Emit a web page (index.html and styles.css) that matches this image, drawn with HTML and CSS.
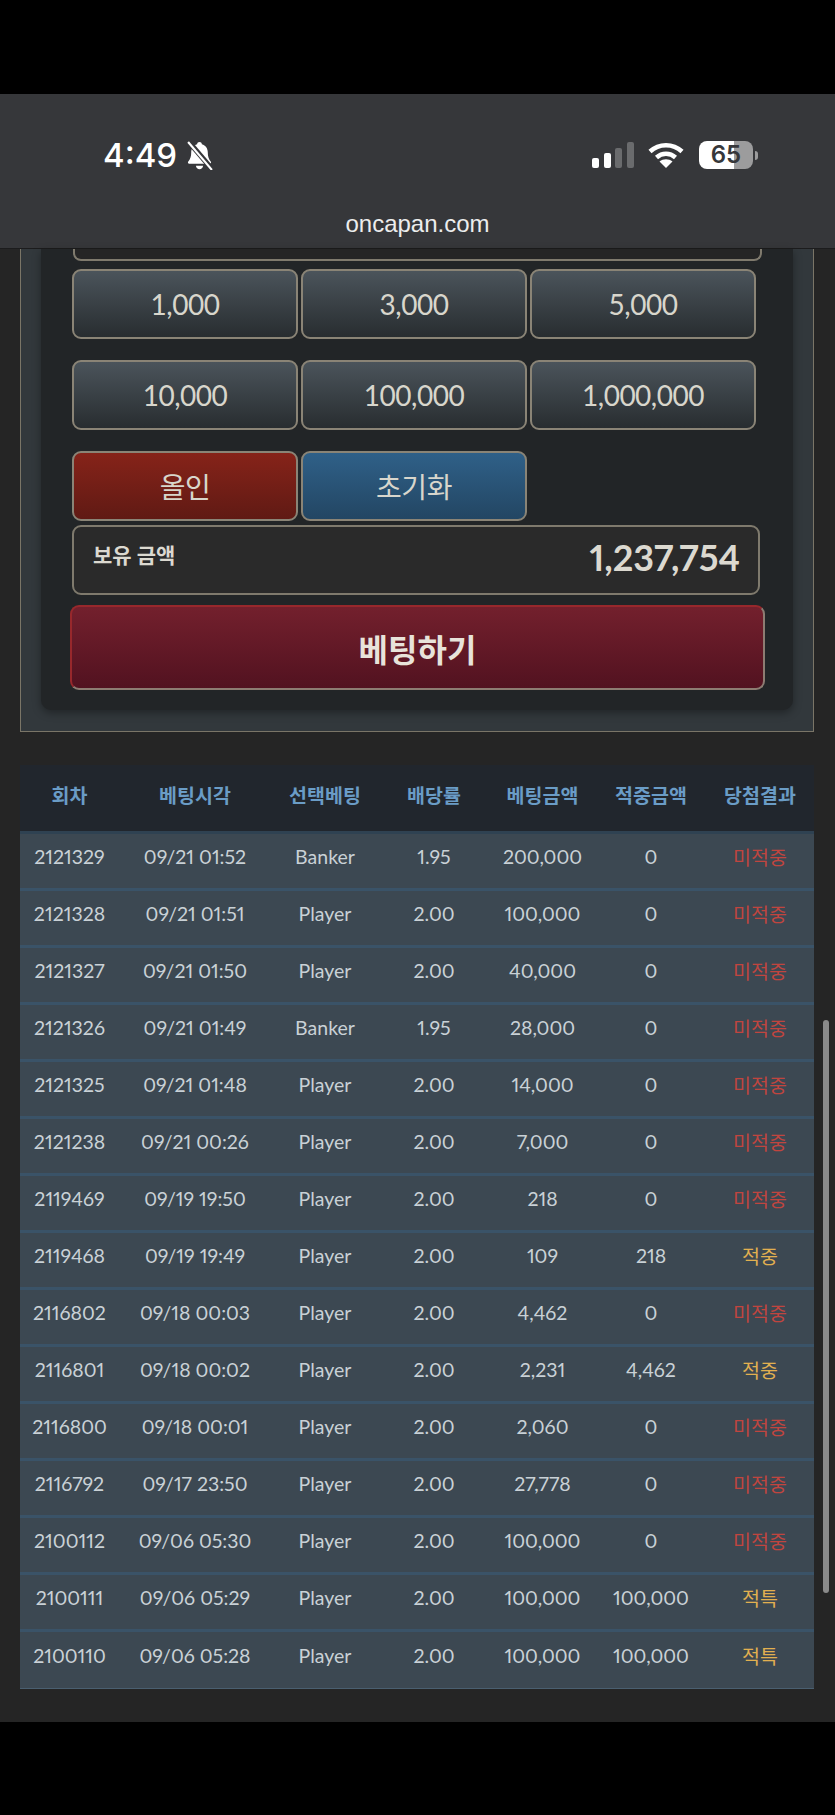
FILE: index.html
```html
<!DOCTYPE html>
<html lang="ko">

<head>
    <meta charset="UTF-8">
    <meta name="viewport" content="width=device-width, initial-scale=1.0">
    <title>oncapan.com</title>
    <link rel="stylesheet" href="styles.css">
</head>

<body>
<div class="black-bar top"></div>

<header class="status">
    <div class="status-row">
        <div class="clock">
            <span>4:49</span>
            <svg class="bell" viewBox="0 0 26 28" width="27" height="29">
                <path fill="#fff" d="M13 1c1.300 0 2.200.9 2.300 2.100 3.700 1 5.700 4 5.700 8 0 4 .8 6 3 9 .5.8 0 1.900-1 1.900H3c-1 0-1.500-1.100-1-1.900 2.200-3 3-5 3-9 0-4 2-7 5.700-8C10.800 1.900 11.700 1 13 1z"/>
                <path fill="#fff" d="M9.500 24h7c-.3 2-1.700 3.300-3.500 3.300S9.800 26 9.500 24z"/>
                <path stroke="#36373a" stroke-width="5" d="M2 0l23 27"/>
                <path stroke="#fff" stroke-width="2" d="M2 1l23 27"/>
            </svg>
        </div>
        <div class="indicators">
            <svg viewBox="0 0 42 26" width="42" height="26">
                <rect x="0" y="16" width="7" height="10" rx="2" fill="#fff"/>
                <rect x="12" y="11" width="7" height="15" rx="2" fill="#fff"/>
                <rect x="23" y="6" width="7" height="20" rx="2" fill="#6a6b6d"/>
                <rect x="35" y="0" width="7" height="26" rx="2" fill="#6a6b6d"/>
            </svg>
            <svg class="wifi" viewBox="0 0 36 26" width="36" height="26">
                <path fill="none" stroke="#fff" stroke-width="4.500" d="M2 9.500C11 1 25 1 34 9.500"/>
                <path fill="none" stroke="#fff" stroke-width="4.500" d="M8.500 15.500c5.500-5 13.500-5 19 0"/>
                <path fill="#fff" d="M18 26l-6.500-6.500c3.800-3 9.200-3 13 0z"/>
            </svg>
            <div class="battery"><span>65</span></div>
            <div class="battery-nub"></div>
        </div>
    </div>
    <div class="url">oncapan.com</div>
</header>

<main class="page">
    <section class="panel">
        <div class="card">
            <div class="amount-input"></div>

            <div class="chip-row">
                <button class="chip">1,000</button>
                <button class="chip">3,000</button>
                <button class="chip">5,000</button>
            </div>
            <div class="chip-row">
                <button class="chip">10,000</button>
                <button class="chip">100,000</button>
                <button class="chip">1,000,000</button>
            </div>
            <div class="chip-row">
                <button class="chip red">올인</button>
                <button class="chip blue">초기화</button>
            </div>

            <div class="balance">
                <span class="balance-label">보유 금액</span>
                <span class="balance-value">1,237,754</span>
            </div>
            <button class="bet-btn">베팅하기</button>
        </div>
    </section>

    <table class="history">
        <thead>
        <tr>
            <th class="c1">회차</th>
            <th class="c2">베팅시각</th>
            <th class="c3">선택베팅</th>
            <th class="c4">배당률</th>
            <th class="c5">베팅금액</th>
            <th class="c6">적중금액</th>
            <th class="c7">당첨결과</th>
        </tr>
        </thead>
        <tbody>
        <tr><td>2121329</td><td>09/21 01:52</td><td>Banker</td><td>1.95</td><td>200,000</td><td>0</td><td class="lose">미적중</td></tr>
        <tr><td>2121328</td><td>09/21 01:51</td><td>Player</td><td>2.00</td><td>100,000</td><td>0</td><td class="lose">미적중</td></tr>
        <tr><td>2121327</td><td>09/21 01:50</td><td>Player</td><td>2.00</td><td>40,000</td><td>0</td><td class="lose">미적중</td></tr>
        <tr><td>2121326</td><td>09/21 01:49</td><td>Banker</td><td>1.95</td><td>28,000</td><td>0</td><td class="lose">미적중</td></tr>
        <tr><td>2121325</td><td>09/21 01:48</td><td>Player</td><td>2.00</td><td>14,000</td><td>0</td><td class="lose">미적중</td></tr>
        <tr><td>2121238</td><td>09/21 00:26</td><td>Player</td><td>2.00</td><td>7,000</td><td>0</td><td class="lose">미적중</td></tr>
        <tr><td>2119469</td><td>09/19 19:50</td><td>Player</td><td>2.00</td><td>218</td><td>0</td><td class="lose">미적중</td></tr>
        <tr><td>2119468</td><td>09/19 19:49</td><td>Player</td><td>2.00</td><td>109</td><td>218</td><td class="win">적중</td></tr>
        <tr><td>2116802</td><td>09/18 00:03</td><td>Player</td><td>2.00</td><td>4,462</td><td>0</td><td class="lose">미적중</td></tr>
        <tr><td>2116801</td><td>09/18 00:02</td><td>Player</td><td>2.00</td><td>2,231</td><td>4,462</td><td class="win">적중</td></tr>
        <tr><td>2116800</td><td>09/18 00:01</td><td>Player</td><td>2.00</td><td>2,060</td><td>0</td><td class="lose">미적중</td></tr>
        <tr><td>2116792</td><td>09/17 23:50</td><td>Player</td><td>2.00</td><td>27,778</td><td>0</td><td class="lose">미적중</td></tr>
        <tr><td>2100112</td><td>09/06 05:30</td><td>Player</td><td>2.00</td><td>100,000</td><td>0</td><td class="lose">미적중</td></tr>
        <tr><td>2100111</td><td>09/06 05:29</td><td>Player</td><td>2.00</td><td>100,000</td><td>100,000</td><td class="win">적특</td></tr>
        <tr><td>2100110</td><td>09/06 05:28</td><td>Player</td><td>2.00</td><td>100,000</td><td>100,000</td><td class="win">적특</td></tr>
        </tbody>
    </table>

    <div class="scrollbar"></div>
</main>

<div class="black-bar bottom"></div>
</body>

</html>
```

FILE: styles.css
```css
* {
    padding: 0;
    margin: 0;
    box-sizing: border-box;
}

body {
    background: #000;
    font-family: "Lato", "Noto Sans CJK KR", sans-serif;
    font-variant-numeric: proportional-nums;
    overflow: hidden;
}

.black-bar.top {
    height: 94px;
}

.black-bar.bottom {
    height: 93px;
}

/* phone status bar */

.status {
    height: 155px;
    background: #36373a;
    border-bottom: 1px solid #1c1c1d;
    color: #fff;
}

.status-row {
    display: flex;
    justify-content: space-between;
    align-items: center;
    padding: 46px 77px 0 103px;
}

.clock {
    display: flex;
    align-items: center;
    gap: 9px;
    font-family: "Inter", sans-serif;
    font-size: 33px;
    font-weight: 500;
    line-height: 30px;
}

.indicators {
    display: flex;
    align-items: center;
}

.wifi {
    margin-left: 14px;
}

.battery {
    width: 54px;
    height: 28px;
    margin-left: 15px;
    border-radius: 8px;
    background: linear-gradient(90deg, #fff 0, #fff 65%, #9c9c9d 65%);
    color: #36373a;
    font-family: "Inter", sans-serif;
    font-size: 24px;
    font-weight: 600;
    line-height: 28px;
    text-align: center;
}

.battery-nub {
    width: 3px;
    height: 9px;
    margin-left: 2px;
    border-radius: 0 3px 3px 0;
    background: #9c9c9d;
}

.url {
    margin-top: 40px;
    text-align: center;
    font-family: "Liberation Sans", sans-serif;
    font-size: 24px;
    color: #eceded;
}

/* betting panel */

.page {
    position: relative;
    height: 1473px;
    background: #252525;
    padding: 0 21px 0 20px;
}

.panel {
    height: 483px;
    padding: 0 20px 21px;
    background: #32383c;
    border: 1px solid #7a7567;
    border-top: none;
}

.card {
    height: 100%;
    padding: 0 30px 0 31px;
    background: #222527;
    border-radius: 0 0 10px 10px;
    box-shadow: 0 3px 8px rgba(0, 0, 0, 0.35);
}

.amount-input {
    width: 689px;
    height: 12px;
    margin-left: 1px;
    background: #252525;
    border: 2px solid #7f7a6d;
    border-top: none;
    border-radius: 0 0 8px 8px;
}

.chip-row {
    display: flex;
    gap: 3px;
    margin-top: 21px;
}

.chip-row:nth-child(2) {
    margin-top: 8px;
}

.chip {
    width: 226px;
    height: 70px;
    border: 2px solid #8a8476;
    border-radius: 9px;
    background: linear-gradient(#4b545b, #282d30);
    color: #d8d6cc;
    font-family: inherit;
    font-size: 28px;
    letter-spacing: -0.5px;
}

.chip.red {
    background: linear-gradient(#862319, #601a14);
}

.chip.blue {
    background: linear-gradient(#2f6088, #234663);
}

.balance {
    display: flex;
    justify-content: space-between;
    width: 688px;
    height: 70px;
    margin-top: 4px;
    padding: 13px 18px 0 19px;
    background: #2a2a2a;
    border: 2px solid #7f7a6d;
    border-radius: 9px;
    color: #dcd9d0;
}

.balance-label {
    font-size: 21px;
    font-weight: 700;
    line-height: 30px;
}

.balance-value {
    font-size: 36px;
    font-weight: 700;
    line-height: 34px;
}

.bet-btn {
    display: block;
    width: 695px;
    height: 85px;
    margin: 10px 0 0 -2px;
    border: 2px solid #8d7c72;
    border-top-color: #97282c;
    border-left-color: #97282c;
    border-radius: 9px;
    background: linear-gradient(#73202d, #521220);
    color: #e8e3da;
    font-family: inherit;
    font-size: 32px;
    font-weight: 700;
}

/* history table */

.history {
    width: 794px;
    margin-top: 33px;
    border-collapse: separate;
    border-spacing: 0;
    table-layout: fixed;
    background: #3c4852;
    text-align: center;
}

.c1 { width: 99px; }
.c2 { width: 152px; }
.c3 { width: 108px; }
.c4 { width: 110px; }
.c5 { width: 107px; }
.c6 { width: 110px; }
.c7 { width: 108px; }

.history th {
    height: 69px;
    padding-bottom: 8px;
    background: #21262d;
    border-bottom: 3px solid #2f4252;
    color: #6a9cc6;
    font-size: 19.500px;
    font-weight: 700;
}

.history td {
    height: 57px;
    padding-bottom: 9px;
    border-bottom: 3px solid #3a5368;
    color: #c9d1d6;
    font-size: 19.500px;
}

.history tr:last-child td {
    border-bottom-width: 1px;
    border-bottom-color: #4a5f70;
}

.history .lose {
    color: #c0453f;
}

.history .win {
    color: #e2b050;
}

.scrollbar {
    position: absolute;
    top: 771px;
    left: 823px;
    width: 6px;
    height: 573px;
    border-radius: 3px;
    background: #8a8a8a;
}
```
